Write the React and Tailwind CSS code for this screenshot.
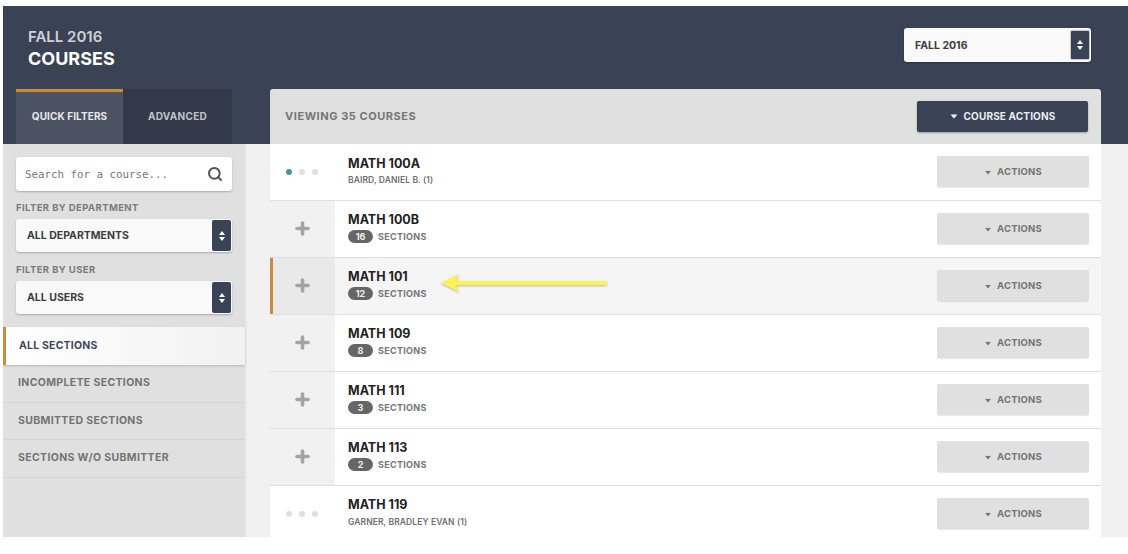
import { Search, Plus } from 'lucide-react'

const courses = [
  { name: 'MATH 100A', user: 'BAIRD, DANIEL B. (1)', dots: true, active: true },
  { name: 'MATH 100B', count: 16 },
  { name: 'MATH 101', count: 12, highlighted: true },
  { name: 'MATH 109', count: 8 },
  { name: 'MATH 111', count: 3 },
  { name: 'MATH 113', count: 2 },
  { name: 'MATH 119', user: 'GARNER, BRADLEY EVAN (1)', dots: true },
]

function Caret({ className }) {
  return (
    <svg width="8" height="5" viewBox="0 0 8 5" className={className}>
      <path d="M0 0h8L4 5z" fill="currentColor" />
    </svg>
  )
}

function Stepper({ className }) {
  return (
    <span className={`flex w-[19px] flex-col items-center justify-center rounded-[2px] bg-[#3a4255] ${className}`}>
      <svg width="6" height="10" viewBox="0 0 6 10">
        <path d="M3 0l3 4H0zM3 10L0 6h6z" fill="#fff" />
      </svg>
    </span>
  )
}

function SelectBox({ label, boxClass, stepClass }) {
  return (
    <div className={`flex items-center justify-between rounded-[3px] bg-[#f9f9f9] pl-[11px] pr-[1px] shadow-[0_1px_2px_rgba(0,0,0,0.25)] ${boxClass}`}>
      <span className="pt-[1px] text-[10.5px] font-bold text-[#3c3c3c]">{label}</span>
      <Stepper className={stepClass} />
    </div>
  )
}

function Row({ course }) {
  return (
    <div className={`flex h-[57px] border-b border-[#dedede] ${course.highlighted ? 'bg-[#f5f5f5]' : 'bg-white'}`}>
      {course.dots ? (
        <div className="flex w-[65px] shrink-0 items-center justify-center gap-[7px] pr-[1px]">
          <span className={`h-[6px] w-[6px] rounded-full ${course.active ? 'bg-[#4f929b]' : 'bg-[#dfdfdf]'}`} />
          <span className="h-[6px] w-[6px] rounded-full bg-[#dfdfdf]" />
          <span className="h-[6px] w-[6px] rounded-full bg-[#dfdfdf]" />
        </div>
      ) : (
        <div className={`flex w-[65px] shrink-0 items-center justify-center pb-[2px] ${course.highlighted ? 'border-l-[3px] border-[#c98a3e] bg-[#e9e9e9] pr-[3px]' : 'bg-[#f1f1f1]'}`}>
          <Plus size={19} strokeWidth={4.5} className="text-[#a3a3a3]" />
        </div>
      )}
      <div className={`flex flex-1 flex-col pl-[13px] ${course.active ? 'pt-[12px]' : 'pt-[11px]'}`}>
        <span className="text-[12.5px] font-bold leading-[16px] text-[#222]">{course.name}</span>
        {course.dots ? (
          <span className={`text-[8.5px] font-semibold leading-[13px] tracking-[0.1px] text-[#6f6f6f] ${course.active ? 'mt-[2px]' : 'mt-[3px]'}`}>{course.user}</span>
        ) : (
          <div className="mt-[2px] flex items-center gap-[5px]">
            <span className="flex h-[13px] min-w-[25px] items-center justify-center rounded-full bg-[#666] px-[7px] text-[9px] font-bold text-[#eee]">
              {course.count}
            </span>
            <span className="text-[9px] font-bold tracking-[0.3px] text-[#767676]">SECTIONS</span>
          </div>
        )}
      </div>
      <div className="flex items-center pb-[2px] pr-[12px]">
        <button className="flex h-[31px] w-[152px] items-center justify-center gap-[5px] rounded-[2px] bg-[#e0e0e0] pt-[2px] text-[9.5px] font-bold tracking-[0.2px] text-[#747474] shadow-[0_1px_1px_rgba(0,0,0,0.1)]">
          <Caret className="scale-75" />
          ACTIONS
        </button>
      </div>
    </div>
  )
}

export default function App() {
  return (
    <div className="relative h-[554px] w-[1128px] overflow-hidden bg-white pl-[3px] pt-[6px] font-['Inter',sans-serif]">
      <header className="flex h-[138px] flex-col justify-between bg-[#3a4255]">
        <div className="flex items-start justify-between pl-[25px] pr-[37px] pt-[22px]">
          <div>
            <div className="text-[15px] font-semibold leading-[18px] text-[#cfd1d6]">FALL 2016</div>
            <div className="mt-[2px] text-[18px] font-bold leading-[22px] text-white">COURSES</div>
          </div>
          <div>
            <SelectBox label="FALL 2016" boxClass="h-[34px] w-[187px]" stepClass="h-[30px] border border-[#fff]/70 !w-[20px]" />
          </div>
        </div>
        <div className="flex items-end justify-between pl-[13px] pr-[27px]">
          <div className="flex h-[55px] w-[216px] bg-[#323949]">
            <div className="flex w-[107px] items-center justify-center border-t-[3px] border-[#c98a3e] bg-[#4b5262] pb-[4px] text-[10px] font-bold tracking-[0.1px] text-[#e6e7ea]">
              QUICK FILTERS
            </div>
            <div className="flex flex-1 items-center justify-center pb-[1px] text-[10px] font-bold tracking-[0.3px] text-[#c0c3c9]">ADVANCED</div>
          </div>
          <div className="flex h-[55px] w-[831px] items-center justify-between rounded-t-[3px] bg-[#e0e0e0] pl-[15px] pr-[13px]">
            <span className="text-[11px] font-bold tracking-[0.55px] text-[#757575]">VIEWING 35 COURSES</span>
            <button className="flex h-[31px] w-[171px] items-center justify-center gap-[6px] rounded-[2px] bg-[#3a4255] text-[10px] font-bold tracking-[0.15px] text-[#eceef1] shadow-[0_1px_2px_rgba(0,0,0,0.3)]">
              <Caret className="scale-90" />
              COURSE ACTIONS
            </button>
          </div>
        </div>
      </header>

      <div className="flex h-[393px] overflow-hidden bg-[#f1f1f1]">
        <aside className="w-[242px] shrink-0 bg-[#e0e0e0] shadow-[1px_0_2px_rgba(0,0,0,0.06)]">
          <div className="px-[13px] pt-[13px]">
            <div className="flex h-[34px] items-center justify-between rounded-[3px] bg-white pl-[9px] pr-[9px] shadow-[0_1px_2px_rgba(0,0,0,0.25)]">
              <span className="pt-[2px] font-['DejaVu_Sans_Mono',monospace] text-[10.8px] text-[#777]">Search for a course...</span>
              <Search size={16} strokeWidth={3} className="text-[#555]" />
            </div>
            <div className="mt-[11px] text-[9.5px] font-bold leading-[12px] tracking-[0.4px] text-[#7b7b7b]">FILTER BY DEPARTMENT</div>
            <div className="mt-[5px]">
              <SelectBox label="ALL DEPARTMENTS" boxClass="h-[33px] w-[216px]" stepClass="h-[31px]" />
            </div>
            <div className="mt-[12px] text-[9.5px] font-bold leading-[12px] tracking-[0.4px] text-[#7b7b7b]">FILTER BY USER</div>
            <div className="mt-[5px]">
              <SelectBox label="ALL USERS" boxClass="h-[33px] w-[216px]" stepClass="h-[31px]" />
            </div>
          </div>
          <nav className="mt-[13px]">
            <div className="flex h-[38px] items-center border-l-[3px] border-[#c98a3e] bg-gradient-to-r from-white to-[#f1f1f1] pl-[13px] text-[10.5px] font-bold tracking-[0.2px] text-[#3f475a] shadow-[0_1px_2px_rgba(0,0,0,0.18)]">
              ALL SECTIONS
            </div>
            {['INCOMPLETE SECTIONS', 'SUBMITTED SECTIONS', 'SECTIONS W/O SUBMITTER'].map((item) => (
              <div key={item} className="flex h-[37.5px] items-center border-b border-[#d4d4d4] pl-[15px] text-[10.5px] font-bold tracking-[0.35px] text-[#737373]">
                {item}
              </div>
            ))}
          </nav>
        </aside>
        <main className="ml-[25px] w-[831px]">
          {courses.map((course) => (
            <Row key={course.name} course={course} />
          ))}
        </main>
      </div>

      <svg width="172" height="26" viewBox="0 0 172 26" className="absolute left-[439px] top-[270px] drop-shadow-[0_1px_1px_rgba(0,0,0,0.25)]">
        <path d="M2 13 L20 4 L17 11 L168 11 V15 L17 15 L20 22 Z" fill="#fdf24f" />
      </svg>
    </div>
  )
}
